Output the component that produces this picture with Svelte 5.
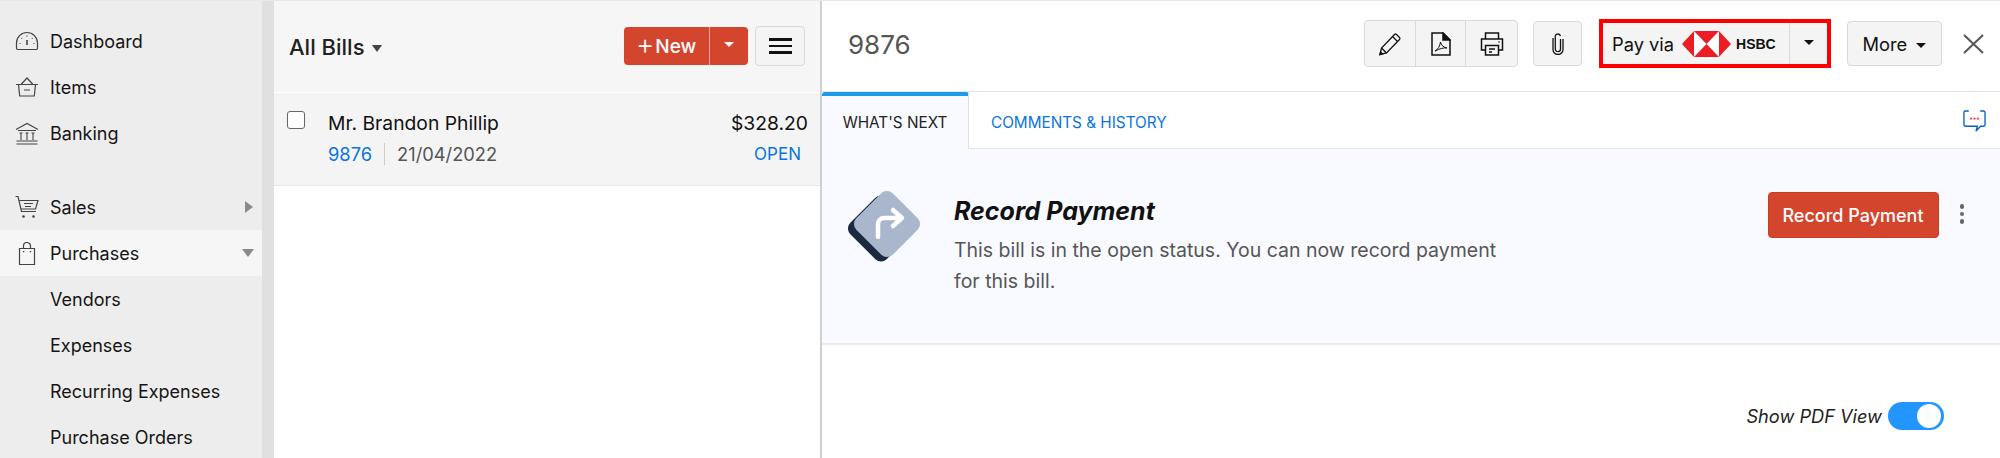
<script>
  const topItems = ['Dashboard', 'Items', 'Banking'];
  const subItems = ['Vendors', 'Expenses', 'Recurring Expenses', 'Purchase Orders'];
</script>

<div class="page">
  <aside class="sidebar">
    <nav class="nav">
      {#each topItems as item}
        <div class="nav-row">
          <span class="nav-icon">
            {#if item === 'Dashboard'}
              <svg width="24" height="20" viewBox="0 0 24 20" fill="none" stroke="#444" stroke-width="1.2"><path d="M3 18.500h18c1 0 1.500-.6 1.500-1.600V12A10.500 10.500 0 0 0 1.500 12v4.900c0 1 .5 1.600 1.500 1.600z"/><path d="M12 9v5" stroke-width="1.600"/><path d="M12 4.500v1M6.500 7l.6.6M17.500 7l-.6.6M4.500 12.500h1M18.500 12.500h1" stroke-dasharray="1.200 1"/></svg>
            {:else if item === 'Items'}
              <svg width="24" height="22" viewBox="0 0 24 22" fill="none" stroke="#444" stroke-width="1.2"><path d="M1 8.500h22M3.500 8.500l1.200 11.500h14.600l1.200-11.500M6 8.500 12 2l6 6.500M9 14h6"/></svg>
            {:else}
              <svg width="24" height="23" viewBox="0 0 24 23" fill="none" stroke="#444" stroke-width="1.1"><path d="M1 7.500 12 1.500l11 6M3 8.500h18M6 11v7M12 11v7M18 11v7M4.500 11h3M10.500 11h3M16.500 11h3M1.500 19h21M1.500 22h21"/></svg>
            {/if}
          </span>
          <span>{item}</span>
        </div>
      {/each}
      <div class="nav-row sales">
        <span class="nav-icon">
          <svg width="24" height="23" viewBox="0 0 24 23" fill="none" stroke="#444" stroke-width="1.2"><path d="M0.500 0.500h2.500l3.500 15h14.500M4 4.500h19l-2.500 8.500H6M9 7.500h9M10 10.500h6"/><circle cx="8.500" cy="20.500" r="1.300" fill="#444" stroke="none"/><circle cx="18.500" cy="20.500" r="1.300" fill="#444" stroke="none"/></svg>
        </span>
        <span>Sales</span>
        <i class="arrow-right"></i>
      </div>
      <div class="nav-row active">
        <span class="nav-icon">
          <svg width="24" height="23" viewBox="0 0 24 23" fill="none" stroke="#444" stroke-width="1.2"><path d="M4.500 6.500h15v16h-15zM8.500 6.500V4a3.500 3.500 0 0 1 7 0v2.500"/><path d="M8.500 9v1.200M15.500 9v1.200" stroke-width="1.400"/></svg>
        </span>
        <span>Purchases</span>
        <i class="arrow-down"></i>
      </div>
      {#each subItems as item}
        <div class="nav-row sub">{item}</div>
      {/each}
    </nav>
    <div class="strip"></div>
  </aside>

  <section class="list">
    <header class="list-head">
      <div class="list-title">All Bills <i class="caret dark"></i></div>
      <div class="list-actions">
        <div class="btn-new">
          <span class="new-main"><span class="plus">+</span> New</span>
          <span class="new-drop"><i class="caret white"></i></span>
        </div>
        <button class="btn-menu" aria-label="menu"><span></span><span></span><span></span></button>
      </div>
    </header>
    <div class="bill">
      <span class="check"></span>
      <div class="bill-body">
        <div class="bill-line">
          <span class="bill-name">Mr. Brandon Phillip</span>
          <span class="bill-amount">$328.20</span>
        </div>
        <div class="bill-line second">
          <span class="bill-meta"><a href="#top">9876</a><span class="sep"></span><span class="bill-date">21/04/2022</span></span>
          <span class="bill-status">OPEN</span>
        </div>
      </div>
    </div>
  </section>

  <main class="detail">
    <header class="detail-head">
      <h1>9876</h1>
      <div class="tools">
        <div class="group">
          <button aria-label="edit">
            <svg width="24" height="24" viewBox="0 0 24 24" fill="none" stroke="#111" stroke-width="1.300"><path d="M2 22.500l1.500-6.500L16.500 2.500a1.500 1.500 0 0 1 2 0l3 3a1.500 1.500 0 0 1 0 2L8.500 21z"/><path d="M3.500 16l5 5M14.500 4.500l5 5M2 22.500l2.500-.6-1.900-1.900z"/></svg>
          </button>
          <button aria-label="pdf">
            <svg width="20" height="24" viewBox="0 0 20 24" fill="none" stroke="#111" stroke-width="1.500"><path d="M1 1h11l7 7v15H1z"/><path d="M12 1l7 7h-7z" fill="#111"/><path d="M4 19c3-1.500 5-5 5.500-9 .5 3 3 5.500 6.500 6-3-.5-7 .5-12 3z" stroke-width="1"/></svg>
          </button>
          <button aria-label="print">
            <svg width="24" height="24" viewBox="0 0 24 24" fill="none" stroke="#111" stroke-width="1.500"><path d="M5.500 7V1h13v6M5 18H1.500V7h21v11H19"/><path d="M5.500 13.500h13v9.500h-13zM9 17h6M9 20h3"/><circle cx="19" cy="10" r=".8" fill="#111" stroke="none"/></svg>
          </button>
        </div>
        <button class="tool single" aria-label="attach">
          <svg width="12" height="22" viewBox="0 0 12 22" fill="none" stroke="#111" stroke-width="1.300"><path d="M8.500 6v10a2.600 2.600 0 0 1-5.200 0V4.500a2.600 2.600 0 0 1 5.200-1.500M11 6v10.500a5 5 0 0 1-10 0V5"/></svg>
        </button>
        <div class="pay-box">
          <div class="pay">
            <span class="pay-main">
              <span class="pay-label">Pay via</span>
              <svg class="hsbc" width="49" height="26" viewBox="0 0 49 26"><path d="M12 0h25v26H12z" fill="#fff"/><path d="M12 0 0 13l12 13zM37 0l12 13-12 13zM12 0h25L24.500 13zM12 26h25L24.500 13z" fill="#ed1c24"/></svg>
              <span class="hsbc-name">HSBC</span>
            </span>
            <span class="pay-drop"><i class="caret black"></i></span>
          </div>
        </div>
        <button class="tool more">More <i class="caret black"></i></button>
        <button class="close" aria-label="close">
          <svg width="21" height="20" viewBox="0 0 21 20" stroke="#555" stroke-width="2"><path d="M1 1l19 18M20 1 1 19"/></svg>
        </button>
      </div>
    </header>

    <div class="tabs">
      <span class="tab current">WHAT'S NEXT</span>
      <span class="tab">COMMENTS &amp; HISTORY</span>
      <svg class="chat" width="23" height="23" viewBox="0 0 24 24" fill="none"><path d="M6 1H2.500A1.500 1.500 0 0 0 1 2.500v13A1.500 1.500 0 0 0 2.500 17H15l-1.500 5 5-5h3a1.500 1.500 0 0 0 1.500-1.500v-13A1.500 1.500 0 0 0 21.500 1H18" stroke="#0a5fc0" stroke-width="1.400"/><path d="M7.500 9h2M11 9h2M14.500 9h2" stroke="#e33" stroke-width="1.600"/></svg>
    </div>

    <div class="next">
      <svg class="next-icon" width="72" height="72" viewBox="0 0 72 72">
        <rect x="7.300" y="12.800" width="51.400" height="51.400" rx="8" fill="#1a2a40" transform="rotate(45 33 38.500)"/>
        <rect x="13.300" y="8.300" width="51.400" height="51.400" rx="8" fill="#a9b6cb" transform="rotate(45 39 34)"/>
        <path d="M30 47V34a6 6 0 0 1 6-6h17M45 20l9 8-9 8" fill="none" stroke="#fff" stroke-width="4.500" stroke-linecap="round" stroke-linejoin="round"/>
      </svg>
      <div class="next-text">
        <h2>Record Payment</h2>
        <p>This bill is in the open status. You can now record payment<br />for this bill.</p>
      </div>
      <div class="next-actions">
        <button class="btn-record">Record Payment</button>
        <span class="dots"><i></i><i></i><i></i></span>
      </div>
    </div>

    <div class="pdf-row">
      <span>Show PDF View</span>
      <span class="toggle"><i></i></span>
    </div>
  </main>
</div>

<style>
  :global(body) {
    margin: 0;
    font-family: Inter, "Liberation Sans", sans-serif;
    color: #111;
  }

  .page {
    display: flex;
    height: 458px;
    overflow: hidden;
    border-top: 1px solid #e8e8e8;
    box-sizing: border-box;
  }

  button {
    font-family: inherit;
    cursor: pointer;
  }

  .sidebar {
    display: flex;
    width: 274px;
    flex: none;
    background: #ededed;
  }

  .nav {
    width: 262px;
    padding-top: 17px;
  }

  .strip {
    width: 12px;
    background: #e0e0e0;
  }

  .nav-row {
    display: flex;
    align-items: center;
    height: 46px;
    font-size: 18px;
    color: #151515;
  }

  .nav-icon {
    display: flex;
    justify-content: center;
    width: 24px;
    margin: 0 11px 0 15px;
  }

  .sales {
    margin-top: 28px;
  }

  .active {
    background: #f6f6f6;
  }

  .sub {
    padding-left: 50px;
  }

  .arrow-right {
    margin-left: auto;
    margin-right: 9px;
    border-left: 8px solid #8a8a8a;
    border-top: 6px solid transparent;
    border-bottom: 6px solid transparent;
  }

  .arrow-down {
    margin-left: auto;
    margin-right: 8px;
    border-top: 8px solid #8a8a8a;
    border-left: 6px solid transparent;
    border-right: 6px solid transparent;
  }

  .caret {
    display: inline-block;
    border-left: 5px solid transparent;
    border-right: 5px solid transparent;
  }

  .caret.dark {
    border-top: 7px solid #444;
    margin-left: 2px;
    vertical-align: 3px;
  }

  .caret.white {
    border-top: 5px solid #fff;
  }

  .caret.black {
    border-top: 5px solid #111;
    vertical-align: 3px;
  }

  .list {
    width: 546px;
    flex: none;
    border-right: 2px solid #cfcfcf;
  }

  .list-head {
    display: flex;
    align-items: center;
    justify-content: space-between;
    height: 91px;
    padding: 0 15px;
    background: #f7f6f7;
    border-bottom: 1px solid #fff;
  }

  .list-title {
    font-size: 22px;
    font-weight: 500;
    color: #222;
  }

  .list-actions {
    display: flex;
    align-items: center;
    gap: 7px;
    margin-top: -1px;
  }

  .btn-new {
    display: flex;
    height: 38px;
    background: #d4452e;
    border-radius: 4px;
    color: #fff;
    font-size: 19px;
    font-weight: 500;
  }

  .new-main {
    display: flex;
    align-items: center;
    gap: 1px;
    width: 86px;
    padding-left: 12px;
    box-sizing: border-box;
    border-right: 1px solid #eda99c;
  }

  .plus {
    font-size: 28px;
    font-weight: 300;
    line-height: 1;
    margin-top: -4px;
  }

  .new-drop {
    display: flex;
    align-items: center;
    justify-content: center;
    width: 38px;
    padding-bottom: 3px;
    box-sizing: border-box;
  }

  .btn-menu {
    display: flex;
    flex-direction: column;
    align-items: center;
    justify-content: center;
    gap: 4px;
    width: 50px;
    height: 40px;
    background: #f4f4f4;
    border: 1px solid #d9d9d9;
    border-radius: 4px;
    padding: 0;
  }

  .btn-menu span {
    width: 23px;
    height: 2.500px;
    background: #111;
  }

  .bill {
    display: flex;
    height: 93px;
    box-sizing: border-box;
    padding: 17px 12px 0 13px;
    background: #f4f4f4;
    border-bottom: 1px solid #e6e6e6;
  }

  .check {
    width: 16px;
    height: 16px;
    flex: none;
    margin-top: 1px;
    border: 1px solid #666;
    border-radius: 3px;
    background: #fff;
  }

  .bill-body {
    flex: 1;
    margin-left: 23px;
  }

  .bill-line {
    display: flex;
    align-items: center;
    justify-content: space-between;
    height: 26px;
    font-size: 19.300px;
  }

  .second {
    margin-top: 5px;
    font-size: 18.300px;
  }

  .bill-meta {
    display: flex;
    align-items: center;
  }

  .bill-meta a {
    color: #0a74e0;
    text-decoration: none;
  }

  .sep {
    width: 1px;
    height: 22px;
    margin: 0 12px;
    background: #ccc;
  }

  .bill-date {
    color: #555;
  }

  .bill-status {
    color: #0a74e0;
    font-size: 17px;
    margin-right: 7px;
  }

  .detail {
    flex: 1;
    min-width: 0;
    background: #fff;
  }

  .detail-head {
    display: flex;
    align-items: center;
    justify-content: space-between;
    height: 91px;
    box-sizing: border-box;
    padding: 0 16px 0 26px;
    border-bottom: 1px solid #e5e5e5;
  }

  h1 {
    margin: 0 0 4px;
    font-size: 26px;
    font-weight: 400;
    color: #555;
  }

  .tools {
    display: flex;
    align-items: center;
    margin-top: -5px;
  }

  .group {
    display: flex;
    height: 45px;
    border: 1px solid #d9d9d9;
    border-radius: 4px;
    background: #f4f4f4;
    overflow: hidden;
  }

  .group button {
    display: flex;
    align-items: center;
    justify-content: center;
    width: 50.670px;
    padding: 0;
    background: none;
    border: none;
    border-right: 1px solid #d9d9d9;
  }

  .group button:last-child {
    border-right: none;
  }

  .tool {
    height: 45px;
    background: #f4f4f4;
    border: 1px solid #d9d9d9;
    border-radius: 4px;
  }

  .single {
    display: flex;
    align-items: center;
    justify-content: center;
    width: 49px;
    margin-left: 15px;
    padding: 0;
  }

  .pay-box {
    margin-left: 17px;
    border: 4px solid #f00;
    background: #f4f4f4;
  }

  .pay {
    display: flex;
    align-items: center;
    height: 41px;
  }

  .pay-main {
    display: flex;
    align-items: center;
    width: 187px;
    height: 100%;
    box-sizing: border-box;
    padding-left: 9px;
    border-right: 1px solid #d9d9d9;
  }

  .pay-label {
    font-size: 18.300px;
  }

  .hsbc {
    margin-left: 8px;
  }

  .hsbc-name {
    margin-left: 5px;
    font-size: 14px;
    font-weight: 700;
    font-family: "Liberation Sans", sans-serif;
  }

  .pay-drop {
    display: flex;
    justify-content: center;
    width: 37px;
    padding-bottom: 3px;
  }

  .more {
    width: 95px;
    margin-left: 16px;
    padding: 0;
    font-size: 18.300px;
    color: #111;
  }

  .more .caret {
    margin-left: 4px;
  }

  .close {
    display: flex;
    margin-left: 21px;
    padding: 0;
    background: none;
    border: none;
  }

  .tabs {
    display: flex;
    align-items: center;
    height: 57px;
    box-sizing: border-box;
    border-bottom: 1px solid #e5e5e5;
  }

  .tab {
    display: flex;
    align-items: center;
    height: 100%;
    box-sizing: border-box;
    padding: 5px 22px 0;
    font-size: 15.300px;
    color: #0a74e0;
  }

  .tab.current {
    height: 57px;
    width: 147px;
    justify-content: center;
    padding: 1px 0 0;
    color: #222;
    background: #f9faff;
    border-top: 4px solid #1c9be8;
    border-right: 1px solid #e0e0e0;
    border-radius: 3px 3px 0 0;
  }

  .chat {
    margin-left: auto;
    margin-right: 14px;
    margin-top: 2px;
  }

  .next {
    display: flex;
    height: 196px;
    box-sizing: border-box;
    padding: 41px 0 0 26px;
    background: #f9faff;
    border-bottom: 2px solid #ebebeb;
  }

  .next-icon {
    flex: none;
  }

  .next-text {
    margin-left: 34px;
  }

  h2 {
    margin: 5px 0 0;
    font-size: 25px;
    line-height: 32px;
    font-weight: 700;
    font-style: italic;
    color: #111;
  }

  p {
    margin: 8px 0 0;
    font-size: 19.500px;
    line-height: 31px;
    color: #555;
  }

  .next-actions {
    display: flex;
    align-items: center;
    gap: 21px;
    height: 46px;
    margin-left: auto;
    margin-top: 2px;
    margin-right: 36px;
  }

  .btn-record {
    width: 171px;
    height: 46px;
    padding: 0;
    background: #d4452e;
    border: 1px solid #cc3a22;
    border-radius: 4px;
    color: #fff;
    font-size: 18px;
    font-weight: 500;
  }

  .dots {
    display: flex;
    flex-direction: column;
    gap: 3px;
    margin-top: -2px;
  }

  .dots i {
    width: 4.500px;
    height: 4.500px;
    border-radius: 50%;
    background: #666;
  }

  .pdf-row {
    display: flex;
    align-items: center;
    justify-content: flex-end;
    gap: 6px;
    padding: 57px 56px 0 0;
    font-size: 18.200px;
    font-style: italic;
    color: #222;
  }

  .toggle {
    display: flex;
    align-items: center;
    justify-content: flex-end;
    width: 56px;
    height: 28px;
    box-sizing: border-box;
    padding-right: 3px;
    border-radius: 14px;
    background: #2196ff;
  }

  .toggle i {
    width: 24px;
    height: 24px;
    border-radius: 50%;
    background: #fff;
  }
</style>
